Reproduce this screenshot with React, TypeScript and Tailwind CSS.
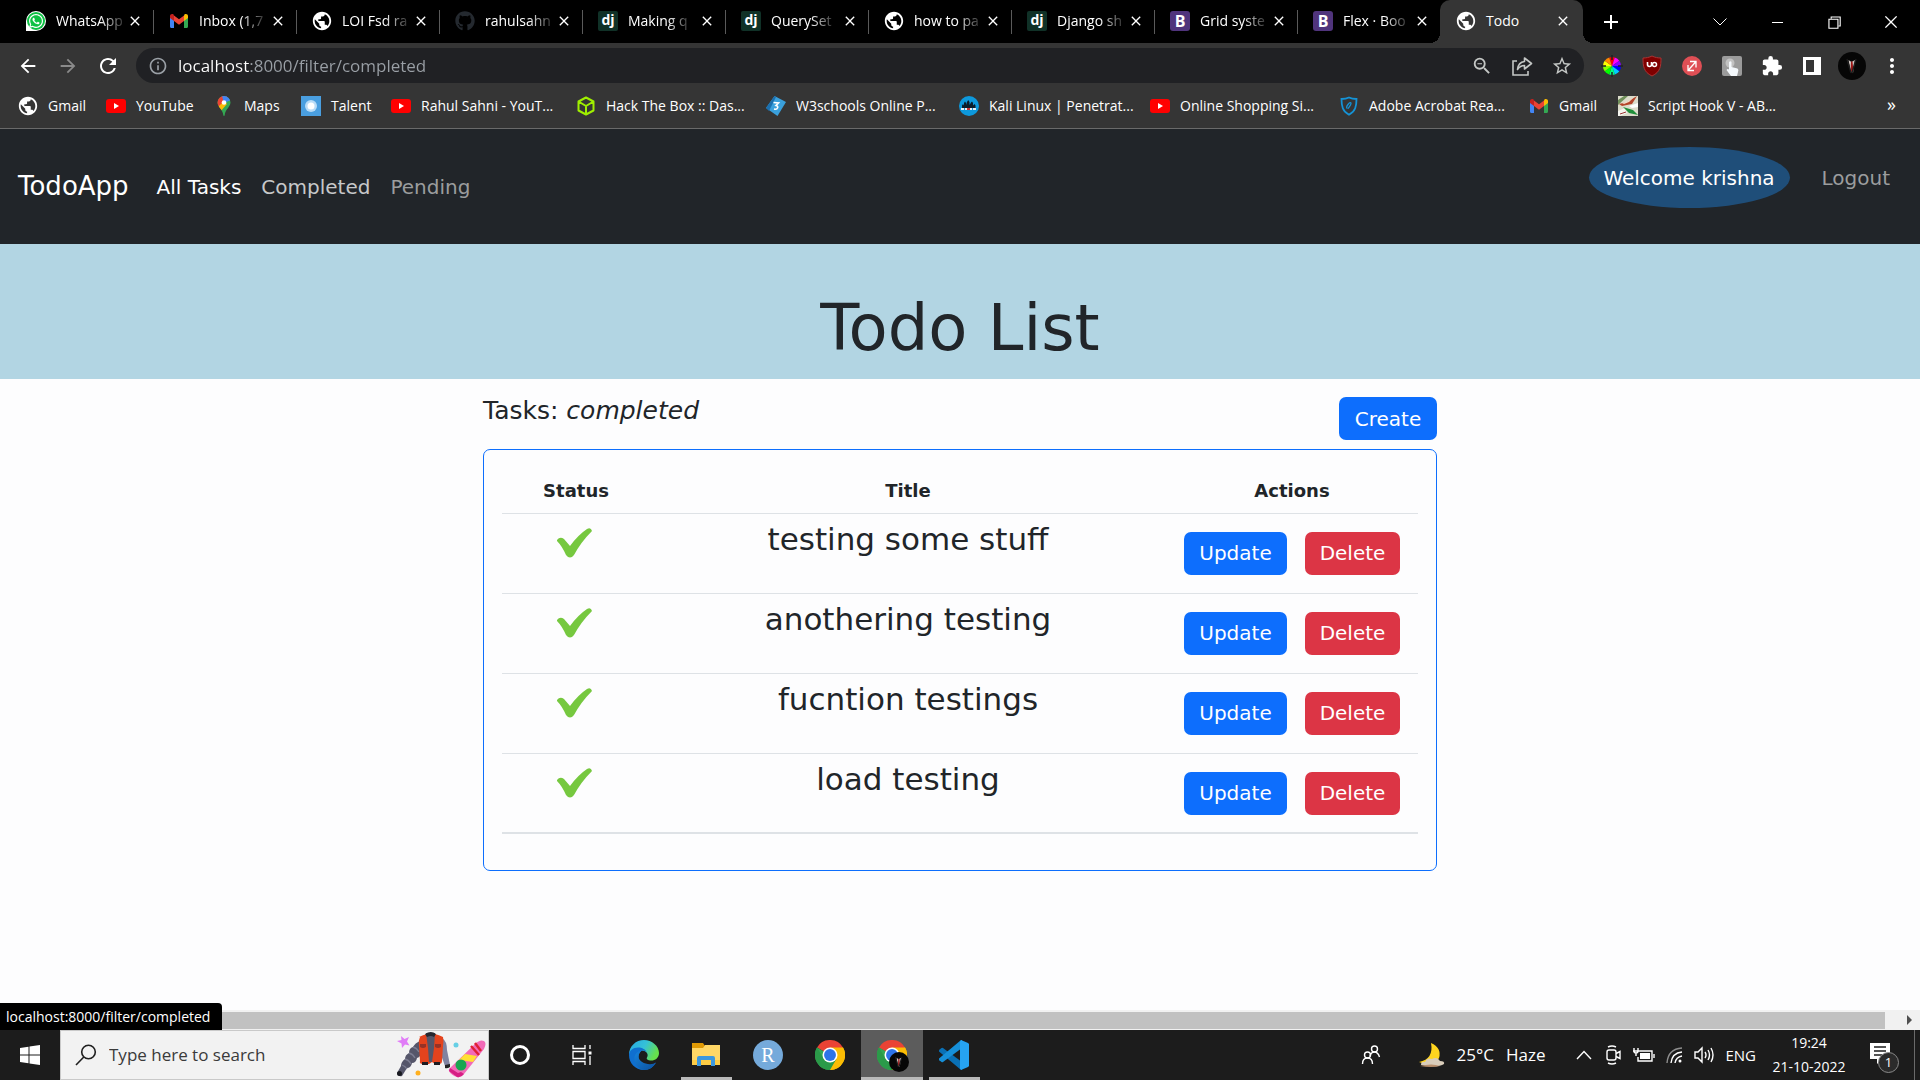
import type { ReactNode } from "react";
import {
  MdArrowBack, MdArrowForward, MdRefresh, MdPublic, MdInfoOutline, MdStarBorder, MdZoomOut,
  MdExtension, MdMoreVert, MdAdd, MdClose,
} from "react-icons/md";
import { FaGithub, FaWhatsapp } from "react-icons/fa";
import { VscChromeClose, VscChromeMinimize, VscChromeRestore } from "react-icons/vsc";

/* ---------- favicons and logos ---------- */

const Globe = () => <MdPublic className="-m-px size-[22px] shrink-0 text-white" />;

const WhatsApp = () => (
  <span className="flex size-5 items-center justify-center rounded-full rounded-bl-sm bg-white">
    <span className="flex size-[18px] items-center justify-center rounded-full bg-[#0dc143] text-white">
      <FaWhatsapp className="size-4" />
    </span>
  </span>
);

const Gmail = () => (
  <svg viewBox="0 0 20 20" className="size-5">
    <path d="M1 5v10.5c0 .8.6 1.5 1.4 1.5H5V8z" fill="#4285f4" />
    <path d="M15 8v9h2.600c.8 0 1.400-.7 1.400-1.500V5z" fill="#34a853" />
    <path d="M15 4.500V10l4-3V5c0-1.800-2-2.700-3.400-1.700z" fill="#fbbc04" />
    <path d="M5 10V4.500l5 3.800 5-3.800V10l-5 3.800z" fill="#ea4335" />
    <path d="M1 5v2l4 3V4.500l-.6-1.200C3 2.300 1 3.200 1 5z" fill="#c5221f" />
  </svg>
);

const Django = () => (
  <span className="flex size-5 items-center justify-center rounded-[2px] bg-[#103127] pb-0.5 text-[14px] leading-none font-bold text-white">dj</span>
);

const Bootstrap = () => (
  <span className="flex size-5 items-center justify-center rounded-[3px] bg-[#50347c] text-[16px] leading-none font-bold text-white">B</span>
);

const YouTube = () => (
  <svg viewBox="0 0 20 20" className="size-5">
    <rect y="3" width="20" height="14" rx="3" fill="#f00" />
    <path d="M8 7l5 3-5 3z" fill="#fff" />
  </svg>
);

const Maps = () => (
  <svg viewBox="0 0 20 20" className="size-5">
    <clipPath id="pin"><path d="M10 0a6.500 6.500 0 0 0-6.500 6.500C3.500 11 9 13.500 9.300 19.200c.1.900 1.300.9 1.400 0C11 13.500 16.500 11 16.500 6.500A6.500 6.500 0 0 0 10 0z" /></clipPath>
    <g clipPath="url(#pin)">
      <rect width="20" height="20" fill="#34a853" />
      <path d="M0 12L14 -2V0L4 14z" fill="#ea4335" />
      <path d="M3 0h7v7L3 9z" fill="#ea4335" />
      <path d="M8 0h9v4l-7 3z" fill="#4285f4" />
      <path d="M2 13L10 5l3 3-7 8z" fill="#fbbc04" />
    </g>
    <circle cx="10" cy="6.500" r="2.300" fill="#fff" />
  </svg>
);

const Talent = () => (
  <svg viewBox="0 0 20 20" className="size-5">
    <rect width="20" height="20" fill="#4a9fe0" />
    <circle cx="10" cy="10" r="6" fill="#b9dcf7" />
    <circle cx="10" cy="10" r="3.500" fill="#fff" />
  </svg>
);

const HackBox = () => (
  <svg viewBox="0 0 20 20" className="size-5" fill="none" stroke="#9fef00" strokeWidth="2" strokeLinejoin="round">
    <path d="M10 1.500l7.500 4v9L10 18.500l-7.500-4v-9zM2.500 5.500L10 10l7.500-4.500M10 10v8.500" />
  </svg>
);

const W3 = () => (
  <svg viewBox="0 0 20 20" className="size-5">
    <path d="M8.500 0L20 6l-8.500 14L0 12z" fill="#3aa0dc" />
    <path d="M8.500 0L10 1 3 15l-3-3z" fill="#1b6fae" />
    <path d="M7.500 6.500l5 .5-2.500 2.500c3 .5 2 4.500-2 3.500" fill="none" stroke="#fff" strokeWidth="1.600" />
  </svg>
);

const Kali = () => (
  <svg viewBox="0 0 20 20" className="size-5">
    <circle cx="10" cy="10" r="10" fill="#0d99dd" />
    <path d="M3 12V9.500l1-1.500 1 1.500V7l1-1.500L7 7v2l1-3 1.200-2L10.500 6v3L12 6.500l1-1 1 1.500v2.500L15.500 8l1 1.500V12z" fill="#0b1d2c" />
    <path d="M2 13h16" stroke="#e8eef4" strokeWidth="2" strokeDasharray="3 1" />
    <path d="M8 13h3" stroke="#c33" strokeWidth="2" />
  </svg>
);

const Adobe = () => (
  <svg viewBox="0 0 20 20" className="size-5" fill="none" stroke="#1593d6" strokeWidth="1.800">
    <path d="M10 1.500c2.500 1.200 5 1.500 7.500 1.500 0 7-1 12.500-7.500 15.700C3.500 15.500 2.500 10 2.500 3 5 3 7.500 2.700 10 1.500z" />
    <path d="M8.500 12.500c-1.500-.5-1-2 .5-4s3-2.500 3-1-1.500 3-3 5" strokeWidth="1.300" />
  </svg>
);

const ScriptHook = () => (
  <svg viewBox="0 0 20 20" className="size-5">
    <rect width="20" height="20" fill="#dcdccb" />
    <path d="M0 4l6-4h4L0 9z" fill="#6f8f5a" />
    <path d="M1 8l8-2 10-6-5 8-10 2z" fill="#b5442a" />
    <path d="M4 7l6-2 6-4-5 5-5 2z" fill="#f0d9c8" />
    <path d="M0 15l7-3 2 5-7 3H0z" fill="#f6f6f0" />
    <path d="M5 11l10 3 5 5-9-2z" fill="#1f8f3a" />
    <path d="M11 10l9-3v4l-6 1z" fill="#fff" />
    <path d="M2 18l6-2" stroke="#933" />
  </svg>
);

const ChromeLogo = () => (
  <svg viewBox="0 0 48 48" className="size-[30px]">
    <path d="M24 24L3.200 12A24 24 0 0 1 44.800 12z" fill="#ea4335" />
    <path d="M24 24L44.800 12A24 24 0 0 1 24 48z" fill="#fbbc04" />
    <path d="M24 24V48A24 24 0 0 1 3.200 12z" fill="#34a853" />
    <path d="M24 12h20.800A24 24 0 0 1 24 48l10.400-18z" fill="#fbbc04" />
    <path d="M3.200 12L13.600 30 24 36l10.400-6L24 48A24 24 0 0 1 3.200 12z" fill="#2b9a49" />
    <circle cx="24" cy="24" r="12" fill="#fff" />
    <circle cx="24" cy="24" r="9.500" fill="#2d73e8" />
  </svg>
);

const EdgeLogo = () => (
  <svg viewBox="0 0 30 30" className="size-[30px]">
    <defs>
      <linearGradient id="edgeTop" x1="0" y1="0" x2="1" y2="0.4">
        <stop offset="0" stopColor="#25a8e4" /><stop offset="0.55" stopColor="#35c1d8" /><stop offset="1" stopColor="#66e04c" />
      </linearGradient>
      <linearGradient id="edgeLow" x1="0" y1="0" x2="1" y2="1">
        <stop offset="0" stopColor="#1583dc" /><stop offset="1" stopColor="#0c4f9c" />
      </linearGradient>
    </defs>
    <path d="M0 15C0 6 7 0 15 0s15 6 15 13c0 5-4 7.500-7.500 7.500-4 0-5.500-1.500-4.500-3 2-3-.5-7-5-7C7 10.500 1 12 0 15z" fill="url(#edgeTop)" />
    <path d="M0 15c0-4 4-7.500 9-7.500 4 0 8 2 8.700 5-1-1.500-2.700-2-4.700-2-2 1-3.500 3.500-3.500 6.500 0 6 6 9.500 11 8.500 3-.6 5-2 6.500-3C24.500 27 20.500 30 15 30 6 30 0 23 0 15z" fill="#0f6fcf" />
    <path d="M9.500 17c0-3 1.500-5.500 3.500-6.500-6 1-8 5-7.500 9 .8 6.500 6 10.500 9.500 10.500 5.500 0 9.500-3 12-7.500-1.500 1-3.500 1.700-6 1.700C15 24 10 21 9.500 17z" fill="url(#edgeLow)" />
  </svg>
);

const FolderLogo = () => (
  <svg viewBox="0 0 30 30" className="size-[30px]">
    <path d="M1 3h11l2 3v4H1z" fill="#e09a05" />
    <path d="M14 5h15v20H1V8h11z" fill="#ffd766" />
    <path d="M1 20h28v5H1z" fill="#fccb45" />
    <path d="M6 26V18q0-2 2-2h14q2 0 2 2v8h-4v-6h-10v6z" fill="#3c97dd" />
  </svg>
);

const VsCodeLogo = () => (
  <svg viewBox="0 0 30 30" className="size-[30px]">
    <path d="M0 11.500q-.5-1 .3-1.700L2.500 8Q3.300 7.500 4 8l19 14v8l-1.500-.5z" fill="#0a70b5" />
    <path d="M0 18.500q-.5 1 .3 1.700L2.500 22q.8.500 1.500 0L23 8V0l-1.500.5z" fill="#168fd8" />
    <path d="M22 0l7 3 1 1v22l-1 1-7 3-1-1.500V1.500z" fill="#26a3f2" />
  </svg>
);

const Suit = ({ className }: { className: string }) => (
  <svg viewBox="0 0 28 28" className={className}>
    <circle cx="14" cy="14" r="14" fill="#060606" />
    <path d="M10.500 8l3 2 3.500-2-2 13h-2z" fill="#cfc6c2" />
    <path d="M13 9.500h1.500l.8 8-1.300 4-1.300-4z" fill="#9b1515" />
    <path d="M9 7l4 14M18 7l-4 14" stroke="#1d1d1d" strokeWidth="1.500" />
  </svg>
);

/* ---------- toolbar icons ---------- */

const Share = () => (
  <svg viewBox="0 0 24 24" className="size-6" fill="none" stroke="#c4c7c5" strokeWidth="1.600">
    <path d="M7 7H3v14h15v-4" />
    <path d="M14.500 4l7 5.500-7 5.500v-3.500c-3 0-5 1-7 4 .4-4 2.500-7.500 7-8z" strokeLinejoin="round" />
  </svg>
);

const wheel = ["#f00", "#f0f", "#80f", "#00f", "#0cf", "#0f8", "#0f0", "#8f0", "#ff0", "#f80"];

const ColorWheel = () => (
  <svg viewBox="-12 -12 24 24" className="size-6">
    {wheel.map((fill, i) => (
      <path key={fill} d="M0 0L-2.800 -8.600A9 9 0 0 1 2.800 -8.600z" fill={fill} transform={`rotate(${i * 36})`} />
    ))}
    <path d="M0-11v5M0 11v-5M-11 0h5M11 0h-5" stroke="#222" strokeWidth="1.500" />
  </svg>
);

const Shield = () => (
  <svg viewBox="0 0 20 22" className="h-[22px] w-5">
    <path d="M10 1c3 1.500 6 2 9 2 0 8-.5 14-9 18C1.500 17 1 11 1 3c3 0 6-.5 9-2z" fill="#800000" stroke="#a33" />
    <path d="M5.500 7v2.500a2 2 0 0 0 4 0V7" fill="none" stroke="#fff" strokeWidth="1.600" />
    <circle cx="12.500" cy="9.500" r="2" fill="none" stroke="#fff" strokeWidth="1.500" />
  </svg>
);

const RedPass = () => (
  <svg viewBox="0 0 20 20" className="size-5">
    <circle cx="10" cy="10" r="10" fill="#df4f55" />
    <path d="M8 5.500h6v6M14 5.500l-8 9M6 9v5.500h6" fill="none" stroke="#fff" strokeWidth="1.300" />
  </svg>
);

const Touch = () => (
  <svg viewBox="0 0 20 20" className="size-5">
    <rect width="20" height="20" rx="2" fill="#9b9b9b" />
    <circle cx="8" cy="7" r="4.500" fill="#c2c2c2" />
    <path d="M7 6q1.500-1.500 2.500 0v5l6 1.500q1.500 1 .5 3.500l-1 4H9l-4.500-6q1-1.500 2.500-.5z" fill="#f4f8fc" />
  </svg>
);

const SidePanel = () => (
  <svg viewBox="0 0 20 20" className="size-5">
    <path d="M1 1h18v18H1zM4 4v12h8V4z" fill="#fff" fillRule="evenodd" />
  </svg>
);

/* ---------- browser chrome ---------- */

const tabs: { title: string; icon: ReactNode; active?: boolean }[] = [
  { title: "WhatsApp", icon: <WhatsApp /> },
  { title: "Inbox (1,7", icon: <Gmail /> },
  { title: "LOI Fsd ra", icon: <Globe /> },
  { title: "rahulsahn", icon: <FaGithub className="size-5 text-[#24292f]" /> },
  { title: "Making q", icon: <Django /> },
  { title: "QuerySet", icon: <Django /> },
  { title: "how to pa", icon: <Globe /> },
  { title: "Django sh", icon: <Django /> },
  { title: "Grid syste", icon: <Bootstrap /> },
  { title: "Flex · Boo", icon: <Bootstrap /> },
  { title: "Todo", icon: <Globe />, active: true },
];

function Tab({ title, icon, active }: { title: string; icon: ReactNode; active?: boolean }) {
  return (
    <div
      className={
        active
          ? "relative flex h-[43px] w-[143px] items-center rounded-t-[10px] bg-[#353535] pr-3 pb-0.5 pl-4 before:absolute before:bottom-0 before:-left-2.5 before:size-2.5 before:bg-[radial-gradient(circle_at_0_0,transparent_10px,#353535_10px)] after:absolute after:-right-2.5 after:bottom-0 after:size-2.5 after:bg-[radial-gradient(circle_at_100%_0,transparent_10px,#353535_10px)]"
          : "flex h-[43px] w-[143px] items-center pr-2.5 pb-0.5 pl-4"
      }
    >
      <button className="flex min-w-0 flex-1 items-center gap-2.5 text-left">
        <span className="flex size-5 shrink-0 items-center justify-center">{icon}</span>
        <span
          className={
            active
              ? "text-[14px] whitespace-nowrap"
              : "text-[14px] whitespace-nowrap [mask-image:linear-gradient(90deg,#000_65%,#0003_100%)]"
          }
        >
          {title}
        </span>
      </button>
      <button aria-label={`Close ${title}`} className="flex size-4 shrink-0 items-center justify-center">
        <MdClose className="size-4 shrink-0 stroke-white" />
      </button>
    </div>
  );
}

function TabStrip() {
  return (
    <div className="flex h-[43px] items-center bg-black pl-2.5 text-white">
      {tabs.map((t, i) => (
        <div key={t.title} className="flex items-center">
          {i > 0 && !t.active ? <span className="-mr-px h-6 w-px bg-[#5a5a5a]" /> : null}
          <Tab {...t} />
        </div>
      ))}
      <button aria-label="New tab" className="ml-4 flex size-6 items-center justify-center">
        <MdAdd className="size-6 stroke-white" />
      </button>
      <div className="ml-auto flex h-9 items-center">
        <button aria-label="Search tabs" className="flex w-[57px] justify-center">
          <svg viewBox="0 0 16 10" className="h-2.5 w-4" fill="none" stroke="#fff"><path d="M1.500 1.500L8 8l6.500-6.500" /></svg>
        </button>
        <button aria-label="Minimize" className="flex w-[57px] justify-center"><VscChromeMinimize className="size-4" /></button>
        <button aria-label="Restore" className="flex w-[57px] justify-center"><VscChromeRestore className="size-[18px]" /></button>
        <button aria-label="Close window" className="flex w-[58px] justify-center"><VscChromeClose className="size-[18px]" /></button>
      </div>
    </div>
  );
}

const extensions: { name: string; icon: ReactNode }[] = [
  { name: "Color picker", icon: <ColorWheel /> },
  { name: "uBlock", icon: <Shield /> },
  { name: "Pass", icon: <RedPass /> },
  { name: "Touch", icon: <Touch /> },
  { name: "Extensions", icon: <MdExtension className="size-[22px]" /> },
  { name: "Side panel", icon: <SidePanel /> },
  { name: "Profile", icon: <Suit className="size-7" /> },
  { name: "Menu", icon: <MdMoreVert className="size-6" /> },
];

function Toolbar() {
  return (
    <div className="flex h-[45px] items-center bg-[#353535] px-2 text-white">
      <button aria-label="Back" className="flex w-10 justify-center"><MdArrowBack className="size-[22px]" /></button>
      <button aria-label="Forward" className="flex w-10 justify-center text-[#8a8a8a]"><MdArrowForward className="size-[22px]" /></button>
      <button aria-label="Reload" className="flex w-10 justify-center"><MdRefresh className="size-6" /></button>
      <div className="ml-2 flex h-[35px] flex-1 items-center rounded-full bg-[#202124] pl-3 text-[#c4c7c5]">
        <MdInfoOutline className="size-5 shrink-0 text-[#9aa0a6]" />
        <input
          aria-label="Address"
          defaultValue="localhost:8000/filter/completed"
          className="ml-2.5 min-w-0 flex-1 bg-[linear-gradient(90deg,#fff_71px,#9aa0a6_71px)] bg-clip-text text-[17px] text-transparent outline-none"
        />
        <button aria-label="Zoom" className="flex w-10 justify-center"><MdZoomOut className="size-[22px]" /></button>
        <button aria-label="Share" className="flex w-10 justify-center"><Share /></button>
        <button aria-label="Bookmark" className="mr-0.5 flex w-10 justify-center"><MdStarBorder className="size-[22px]" /></button>
      </div>
      <div className="ml-2 flex items-center">
        {extensions.map((e) => (
          <button key={e.name} aria-label={e.name} className="flex w-10 justify-center">{e.icon}</button>
        ))}
      </div>
    </div>
  );
}

const bookmarks: { label: string; icon: ReactNode; width: string }[] = [
  { label: "Gmail", icon: <Globe />, width: "w-[88px]" },
  { label: "YouTube", icon: <YouTube />, width: "w-[108px]" },
  { label: "Maps", icon: <Maps />, width: "w-[87px]" },
  { label: "Talent", icon: <Talent />, width: "w-[90px]" },
  { label: "Rahul Sahni - YouT...", icon: <YouTube />, width: "w-[185px]" },
  { label: "Hack The Box :: Das...", icon: <HackBox />, width: "w-[190px]" },
  { label: "W3schools Online P...", icon: <W3 />, width: "w-[193px]" },
  { label: "Kali Linux | Penetrat...", icon: <Kali />, width: "w-[191px]" },
  { label: "Online Shopping Si...", icon: <YouTube />, width: "w-[189px]" },
  { label: "Adobe Acrobat Rea...", icon: <Adobe />, width: "w-[190px]" },
  { label: "Gmail", icon: <Gmail />, width: "w-[89px]" },
  { label: "Script Hook V - AB...", icon: <ScriptHook />, width: "w-[190px]" },
];

function Bookmarks() {
  return (
    <nav aria-label="Bookmarks" className="flex h-[41px] items-center border-b border-[#6a6a6a] bg-[#353535] pb-1 pl-[18px] text-[14px] text-white">
      {bookmarks.map((b, i) => (
        <a key={i} href="#" className={`flex shrink-0 items-center gap-2.5 whitespace-nowrap ${b.width}`}>
          <span className="flex size-5 shrink-0 items-center justify-center">{b.icon}</span>
          <span className="pb-0.5">{b.label}</span>
        </a>
      ))}
      <button aria-label="More bookmarks" className="mr-6 ml-auto pb-1 text-[18px] leading-none">»</button>
    </nav>
  );
}

/* ---------- todo page ---------- */

const Check = () => (
  <svg viewBox="2 0 36 30" className="h-[30px] w-9 overflow-visible" role="img" aria-label="Completed">
    <path d="M1 12q3-4 7-1l6 7Q22 7 31 1q4-2 5 2-11 11-18 24-4 5-8 0Q6 18 1 13z" fill="#76c83f" />
  </svg>
);

const tasks = ["testing some stuff", "anothering testing", "fucntion testings", "load testing"];

const button = "flex h-[43px] items-center justify-center rounded-[7px] text-[20px] text-white";

function TodoPage() {
  return (
    <main className="flex-1 bg-[#fdfdfe] font-['DejaVu_Sans',sans-serif] text-[#212529]">
      <nav className="flex h-[115px] items-center bg-[#212529] px-[18px] text-[20px]">
        <a href="#" className="mr-7 text-[26px] text-white">TodoApp</a>
        <div className="flex items-center gap-5">
          <a href="#" className="text-white">All Tasks</a>
          <a href="#" className="text-[#c7c8c9]">Completed</a>
          <a href="#" className="text-[#9b9d9e]">Pending</a>
        </div>
        <div className="mb-[18px] ml-auto flex items-center gap-8">
          <span className="flex h-[61px] w-[201px] items-center justify-center rounded-[50%] bg-[#1f4e79] text-white">Welcome krishna</span>
          <a href="#" className="mr-3 text-[#9b9d9e]">Logout</a>
        </div>
      </nav>
      <header className="flex h-[135px] items-center justify-center bg-[#b2d5e3] pt-8">
        <h1 className="text-[64px] leading-none">Todo List</h1>
      </header>
      <div className="mx-auto w-full max-w-[954px] pt-[18px]">
        <div className="flex items-start justify-between">
          <h2 className="text-[25px] leading-7">Tasks: <em>completed</em></h2>
          <button className={`${button} w-[98px] bg-[#0d6efd]`}>Create</button>
        </div>
        <div className="mt-[9px] rounded-[7px] border border-[#0d6efd] px-[18px] pt-[18px] pb-9">
          <table className="w-full table-fixed border-b-2 border-[#dee2e6] text-center">
            <colgroup>
              <col className="w-[148px]" />
              <col />
              <col className="w-[252px]" />
            </colgroup>
            <thead>
              <tr className="h-[45px] border-b border-[#dee2e6] text-[18px]">
                <th scope="col">Status</th>
                <th scope="col">Title</th>
                <th scope="col">Actions</th>
              </tr>
            </thead>
            <tbody>
              {tasks.map((task) => (
                <tr key={task} className="h-20 border-b border-[#dee2e6] align-top">
                  <td className="pt-3.5"><div className="flex justify-center"><Check /></div></td>
                  <td className="pt-[7px] text-[31px] leading-9">{task}</td>
                  <td className="pt-[18px]">
                    <div className="flex justify-center gap-[18px]">
                      <button className={`${button} w-[103px] bg-[#0d6efd]`}>Update</button>
                      <button className={`${button} w-[95px] bg-[#dc3545]`}>Delete</button>
                    </div>
                  </td>
                </tr>
              ))}
            </tbody>
          </table>
        </div>
      </div>
    </main>
  );
}

/* ---------- scroll bar and status bubble ---------- */

function BottomScroll() {
  return (
    <div className="relative flex h-5 items-center bg-[#f1f1f1]">
      <div className="mr-[35px] h-[17px] flex-1 bg-[#c1c1c1]" />
      <svg viewBox="0 0 5 10" className="absolute right-2 h-2.5 w-[5px]"><path d="M0 0l5 5-5 5z" fill="#505050" /></svg>
      <div className="absolute bottom-0 left-0 flex h-[27px] w-[222px] items-center rounded-tr-[4px] bg-black pl-1.5 text-[14px] text-white">
        localhost:8000/filter/completed
      </div>
    </div>
  );
}

/* ---------- taskbar ---------- */

const Outfit = () => (
  <svg viewBox="0 0 92 48" className="h-12 w-[92px]">
    <path d="M5 5l3.500 3L13 6l-2 4.500 2.500 4L9 13.500 6 17l-.5-4.500L1 10l4.500-1z" fill="#e07cf7" />
    <path d="M24 10q-5 2-7 6-4 1-4 6-4 2-4 6-4 3-4 7l-4 7q1 4 5 3l5-8q4 0 5-5 4 0 5-5 4-1 4-6z" fill="#55566a" />
    <path d="M17 16q4 1 6 5M13 22q4 1 6 5M9 28q4 1 6 5M6 34q3 1 5 4" stroke="#7c7d92" strokeWidth="1.300" fill="none" />
    <circle cx="3.500" cy="42.500" r="2.500" fill="#191a20" />
    <path d="M46 7q5 3 5 12l3 15-5 1-5-14z" fill="#8082a0" />
    <path d="M49 34l5-1v3q-3 2-5 1z" fill="#222" />
    <path d="M23 6q4-2 8-3h8q4 1 8 3 1 4 0 9l-1 15q0 3-3 3h-4l-3-2-3 2h-6q-4 0-3-3l-1-15q-1-5 1-9z" fill="#e4431d" />
    <path d="M30 2h9l-1 15-2 14h-3l-1-14z" fill="#55566a" />
    <path d="M29 3q6-4 11 0l-2 3q-3-2-7 0z" fill="#26272f" />
    <path d="M24 13h6v3q-3 2-6 0zM39 13h6v3q-3 2-6 0z" fill="#963226" />
    <path d="M26 31h6v3h-6zM38 31h6v3h-6z" fill="#1c1c22" />
    <circle cx="60" cy="14" r="2.500" fill="#66cfe5" />
    <circle cx="22" cy="42" r="2.500" fill="#ffb01f" />
    <path d="M54 37L79 13q5-5 9-3 3 2 0 8L68 43q-3 4-7 3-6-2-8-6-1-1 1-3z" fill="#f26ab8" />
    <path d="M54 37l-1 3 8 6q4 1 7-3l-3-2-3 1z" fill="#d61f84" />
    <path d="M66 26l13 2-2 3-14-2zM69 23l12 2-2 3-13-2z" fill="#ffe034" />
    <path d="M75 15l8 9M79 12l6 8" stroke="#df2134" strokeWidth="2.500" />
    <circle cx="65" cy="34" r="5.500" fill="#18a651" />
  </svg>
);

const apps: { name: string; icon: ReactNode; line?: string; active?: boolean }[] = [
  { name: "Cortana", icon: <span className="size-5 rounded-full border-[3px] border-white" /> },
  {
    name: "Task view",
    icon: (
      <svg viewBox="0 0 20 20" className="size-5" fill="none" stroke="#fff" strokeWidth="1.300">
        <path d="M1 0v3.500h12V0M1 20v-3.500h12V20M1 6.500h12v7H1zM18 0v4M18 11v9" />
        <path d="M16.500 6.500h3v3h-3z" fill="#fff" stroke="none" />
      </svg>
    ),
  },
  { name: "Edge", icon: <EdgeLogo /> },
  { name: "File Explorer", icon: <FolderLogo />, line: "w-[51px]" },
  {
    name: "R",
    icon: <span className="flex size-[30px] items-center justify-center rounded-full bg-[#75aadb] font-['Liberation_Serif',serif] text-[20px] leading-none text-white">R</span>,
  },
  { name: "Chrome", icon: <ChromeLogo /> },
  {
    name: "Chrome profile",
    icon: <span className="relative"><ChromeLogo /><Suit className="absolute -right-0.5 -bottom-0.5 size-5" /></span>,
    line: "w-[62px]",
    active: true,
  },
  { name: "VS Code", icon: <VsCodeLogo />, line: "w-[51px]" },
];

const trayStroke = { fill: "none", stroke: "#fff", strokeWidth: 1.4 };

function Taskbar() {
  return (
    <footer className="flex h-[50px] items-center bg-[#1c1c1c] text-white">
      <button aria-label="Start" className="flex h-full w-[60px] items-center justify-center">
        <svg viewBox="0 0 20 20" className="size-5" fill="#fff"><path d="M0 3l8.500-1.300v7.800H0zM9.500 1.500L20 0v9.500H9.500zM0 10.500h8.500v7.800L0 17zM9.500 10.500H20V20L9.500 18.500z" /></svg>
      </button>
      <label className="flex h-full w-[429px] items-center border border-[#c9c9c9] bg-[#f2f2f2] pl-3.5">
        <svg viewBox="0 0 22 22" className="size-[22px] shrink-0" fill="none" stroke="#1f1f1f" strokeWidth="1.600"><circle cx="13.500" cy="8" r="6.800" /><path d="M8.800 13L1 21" /></svg>
        <input aria-label="Search" placeholder="Type here to search" className="ml-3 min-w-0 flex-1 bg-transparent text-[17px] outline-none placeholder:text-[#3a3a3a]" />
        <Outfit />
      </label>
      {apps.map((a) => (
        <button
          key={a.name}
          aria-label={a.name}
          className={a.active ? "relative flex h-full w-[62px] items-center justify-center bg-[#5c5c5c]" : "relative flex h-full w-[62px] items-center justify-center"}
        >
          {a.icon}
          {a.line ? <span className={`absolute bottom-0 h-[3px] bg-[#b9b9b9] ${a.line}`} /> : null}
        </button>
      ))}
      <div className="ml-auto flex h-full items-center">
        <button aria-label="People" className="mr-9">
          <svg viewBox="0 0 20 20" className="size-5" {...trayStroke}>
            <circle cx="13.500" cy="4" r="3" /><path d="M9 11q1-4 4.500-4T18.500 12" />
            <circle cx="6.500" cy="10" r="3" /><path d="M1.500 19q0-6 5-6t5 6" />
          </svg>
        </button>
        <button className="mr-6 flex items-center gap-3 text-[17px]">
          <svg viewBox="0 0 28 26" className="h-[26px] w-7">
            <path d="M14 1q11 5 8 15-4 8-14 6l-6-2q15-3 12-19z" fill="#ffd51f" />
            <path d="M4 23q0-4 4-3 2-5 7-3 5-3 8 2 5 0 4 3-6 4-23 1z" fill="#d9cdbb" />
            <path d="M3 24q12-3 20 0-8 2-20 0z" fill="#b98f6c" />
          </svg>
          <span>25°C</span>
          <span>Haze</span>
        </button>
        <button aria-label="Show hidden icons" className="flex w-[30px] justify-center">
          <svg viewBox="0 0 16 10" className="h-2.5 w-4" {...trayStroke}><path d="M1 9l7-7.500L15 9" /></svg>
        </button>
        <button aria-label="Camera" className="flex w-[30px] justify-center">
          <svg viewBox="0 0 18 20" className="h-5 w-[18px]" {...trayStroke}><rect x="2" y="5" width="9" height="10" rx="2" /><path d="M11 8.500l4-2v7l-4-2M3 2q4-2 8 0M3 18q4 2 8 0" /></svg>
        </button>
        <button aria-label="Battery" className="flex w-[30px] justify-center">
          <svg viewBox="0 0 22 16" className="h-4 w-[22px]" {...trayStroke}><path d="M6 4h13v10H5v-4M21 7v4M1 1v3q0 2 2 2t2-2V1M0 4h6M3 6v3" /><path d="M7 6h10v6H7z" fill="#fff" stroke="none" /></svg>
        </button>
        <button aria-label="Network" className="flex w-[30px] justify-center">
          <svg viewBox="0 0 18 18" className="size-[18px]" {...trayStroke}><path d="M2 17Q3 3 17 2" opacity=".5" /><path d="M6 17Q7 7 17 6M10 17q1-6 7-7" /><circle cx="15" cy="15" r="1.500" fill="#fff" stroke="none" /></svg>
        </button>
        <button aria-label="Volume" className="flex w-[30px] justify-center">
          <svg viewBox="0 0 20 18" className="h-[18px] w-5" {...trayStroke}><path d="M1 6h3l4-4v14l-4-4H1zM11 6q2 3 0 6M14 4q3 5 0 10M17 2q4 7 0 14" /></svg>
        </button>
        <span className="ml-1.5 text-[15px]">ENG</span>
        <time className="ml-3.5 flex w-[78px] flex-col items-center text-[14px] leading-6 whitespace-nowrap">
          <span>19:24</span>
          <span>21-10-2022</span>
        </time>
        <button aria-label="Notifications, 1 new" className="relative mr-4 ml-[22px] size-7">
          <svg viewBox="0 0 28 28" className="size-7"><path d="M0 2h20v16H12l-5 5v-5H0z" fill="#fff" /><path d="M4 6h12M4 10h12M4 14h8" stroke="#1c1c1c" strokeWidth="1.500" /></svg>
          <span className="absolute top-[11px] left-2 flex size-[21px] items-center justify-center rounded-full border border-[#8a8a8a] bg-[#2b2b2b] text-[13px] leading-none">1</span>
        </button>
        <span className="mr-[5px] h-full w-px bg-[#6a6a6a]" />
      </div>
    </footer>
  );
}

export default function App() {
  return (
    <div className="flex min-h-screen flex-col overflow-x-hidden font-['Open_Sans',sans-serif]">
      <TabStrip />
      <Toolbar />
      <Bookmarks />
      <TodoPage />
      <BottomScroll />
      <Taskbar />
    </div>
  );
}
